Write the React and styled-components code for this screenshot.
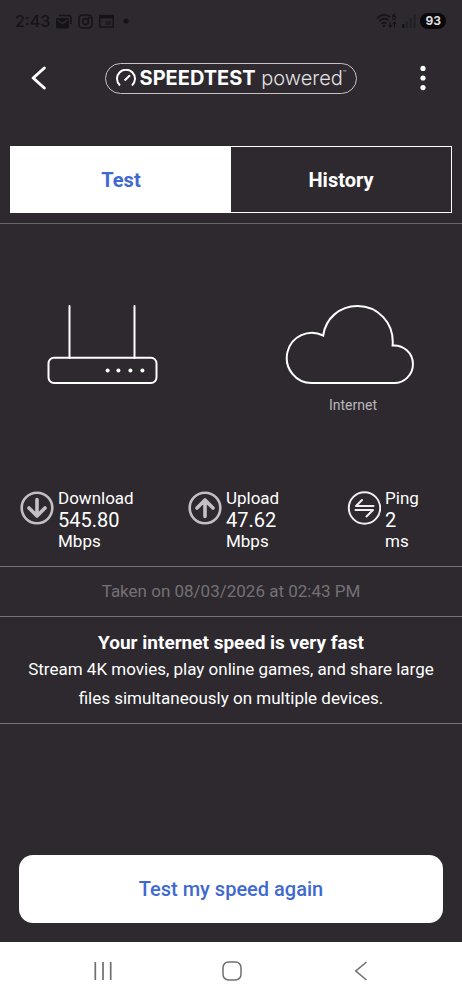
import React, { useState } from 'react';
import styled, { createGlobalStyle } from 'styled-components';

const GlobalStyle = createGlobalStyle`
    * {
        box-sizing: border-box;
    }

    body {
        margin: 0;
        background: #2d292e;
        color: #ffffff;
        font-family: Roboto, "Liberation Sans", sans-serif;
    }

    button {
        font-family: inherit;
        cursor: pointer;
    }

    svg {
        display: block;
        flex: none;
    }
`;

const Page = styled.div`
    display: flex;
    flex-direction: column;
    min-height: 100vh;
`;

const StatusBar = styled.div`
    display: flex;
    justify-content: space-between;
    align-items: center;
    height: 42px;
    padding: 0 16px 0 15px;
    color: #151317;
`;

const StatusGroup = styled.div`
    display: flex;
    align-items: center;
    gap: ${(props) => props.$gap}px;
`;

const Clock = styled.span`
    font-family: Inter, Roboto, sans-serif;
    font-weight: 500;
    font-size: 16px;
`;

const Battery = styled.span`
    padding: 0 5px;
    border-radius: 8px;
    background: #09080a;
    color: #dedcdf;
    font-family: Inter, Roboto, sans-serif;
    font-weight: 700;
    font-size: 12px;
    line-height: 16px;
`;

const Header = styled.header`
    display: flex;
    justify-content: space-between;
    align-items: center;
    height: 72px;
    padding: 0 24px;
`;

const IconButton = styled.button`
    display: flex;
    justify-content: center;
    align-items: center;
    width: 30px;
    height: 40px;
    padding: 0;
    border: none;
    background: none;
    color: ${(props) => props.$color || '#ffffff'};
`;

const Logo = styled.div`
    display: flex;
    align-items: center;
    gap: 4px;
    height: 31px;
    padding: 0 10px;
    border: 1px solid #c4c2c5;
    border-radius: 16px;
    font-family: Inter, "Open Sans", sans-serif;
    font-size: 20px;
    line-height: 28px;
    white-space: nowrap;
`;

const LogoName = styled.span`
    font-weight: 700;
`;

const LogoTag = styled.span`
    font-weight: 300;
    color: #e3e1e4;
`;

const TradeMark = styled.sup`
    font-size: 6px;
    line-height: 6px;
    vertical-align: 10px;
`;

const Tabs = styled.div`
    display: flex;
    height: 67px;
    margin: 32px 10px 10px;
    border: 1px solid #ffffff;
`;

const Tab = styled.button`
    flex: 1;
    border: none;
    background: ${(props) => (props.$active ? '#ffffff' : 'transparent')};
    color: ${(props) => (props.$active ? '#4069d0' : '#ffffff')};
    font-weight: 700;
    font-size: 20px;
`;

const Diagram = styled.section`
    display: flex;
    justify-content: space-between;
    padding: 80px 41px 74px 47px;
    border-top: 1px solid #69666a;
`;

const DiagramNode = styled.figure`
    display: flex;
    flex-direction: column;
    align-items: center;
    gap: 12px;
    margin: 0;
`;

const DiagramLabel = styled.figcaption`
    color: #b9b7ba;
    font-size: 14px;
    line-height: 18px;
`;

const Stats = styled.section`
    display: grid;
    grid-template-columns: 38% 36% 1fr;
    padding: 0 0 14px 20px;
`;

const Stat = styled.div`
    display: flex;
    align-items: flex-start;
    gap: 4px;
`;

const StatIcon = styled.div`
    padding-top: 3px;
`;

const StatText = styled.div`
    display: flex;
    flex-direction: column;
    font-size: 17px;
    line-height: 21px;
`;

const StatValue = styled.span`
    font-size: 20px;
    line-height: 22px;
`;

const Taken = styled.p`
    margin: 0;
    padding: 14px 16px;
    border: 1px solid #757276;
    border-width: 1px 0;
    color: #747176;
    font-size: 17px;
    line-height: 21px;
    text-align: center;
`;

const Verdict = styled.section`
    padding: 14px 16px 10px;
    border-bottom: 1px solid #757276;
    text-align: center;
`;

const VerdictTitle = styled.h1`
    margin: 0;
    font-weight: 700;
    font-size: 19px;
    line-height: 24px;
`;

const VerdictText = styled.p`
    margin: 0;
    font-size: 17px;
    line-height: 29px;
`;

const Footer = styled.footer`
    margin-top: auto;
    padding: 19px;
`;

const PrimaryButton = styled.button`
    width: 100%;
    height: 68px;
    border: none;
    border-radius: 14px;
    background: #ffffff;
    color: #4069d0;
    font-weight: 500;
    font-size: 20px;
`;

const NavBar = styled.nav`
    display: flex;
    justify-content: space-between;
    align-items: center;
    height: 58px;
    padding: 0 86px 0 88px;
    background: #ffffff;
`;

const MailIcon = () => (
  <svg width="16" height="15" viewBox="0 0 16 15">
    <path d="M3 1.5H13Q14.8 1.5 14.8 3.3V10" fill="none" stroke="currentColor" strokeWidth="1.6" />
    <rect x="0" y="4" width="13" height="10.5" rx="1.5" fill="currentColor" />
    <path d="M1.5 6L6.5 9.6L11.5 6" fill="none" stroke="#2d292e" strokeWidth="1.3" />
  </svg>
);

const CameraIcon = () => (
  <svg width="15" height="15" viewBox="0 0 15 15" fill="none" stroke="currentColor" strokeWidth="1.5">
    <rect x="1" y="1" width="13" height="13" rx="3.5" />
    <circle cx="7.5" cy="7.5" r="3" />
    <circle cx="11.2" cy="3.8" r="0.5" />
  </svg>
);

const WindowIcon = () => (
  <svg width="15" height="14" viewBox="0 0 15 14">
    <rect x="0.8" y="1.6" width="13.4" height="11.4" fill="none" stroke="currentColor" strokeWidth="1.4" />
    <path d="M0 1H15V4.4H0Z" fill="currentColor" />
    <path d="M6.5 7H12V11H6.5Z" fill="currentColor" opacity="0.6" />
  </svg>
);

const DotIcon = () => (
  <svg width="12" height="6" viewBox="0 0 12 6">
    <circle cx="6" cy="3" r="2.5" fill="currentColor" />
  </svg>
);

const WifiIcon = () => (
  <svg width="22" height="16" viewBox="0 0 22 16" fill="none" stroke="currentColor">
    <path d="M1 5.5Q7.5 -1 14 4.2M3.3 8.2Q8 3.6 12.4 7.3M5.6 10.8Q8 8.8 10.4 10.6" strokeWidth="1.7" />
    <circle cx="8" cy="13" r="1.3" fill="currentColor" stroke="none" />
    <path d="M19.5 1Q16.6 1 16.6 4.4A1.6 1.6 0 1 0 17 3.6" strokeWidth="1.1" />
    <path d="M14.2 9V14M12.4 12.2L14.2 14.2L16 12.2M18.4 14.5V9.3M16.6 11L18.4 9L20.2 11" strokeWidth="1.1" />
  </svg>
);

const SignalIcon = () => (
  <svg width="14" height="14" viewBox="0 0 14 14" fill="currentColor">
    <rect x="0" y="10" width="2.4" height="4" />
    <rect x="3.8" y="7" width="2.4" height="7" opacity="0.35" />
    <rect x="7.6" y="4" width="2.4" height="10" opacity="0.35" />
    <rect x="11.4" y="0" width="2.4" height="14" opacity="0.35" />
  </svg>
);

const BackIcon = () => (
  <svg width="16" height="24" viewBox="0 0 16 24">
    <path d="M13.3 2L2.2 12L13.3 22" fill="none" stroke="currentColor" strokeWidth="3" strokeLinecap="round" strokeLinejoin="round" />
  </svg>
);

const MoreIcon = () => (
  <svg width="6" height="26" viewBox="0 0 6 26" fill="currentColor">
    <circle cx="3" cy="3.4" r="2.6" />
    <circle cx="3" cy="13" r="2.6" />
    <circle cx="3" cy="22.6" r="2.6" />
  </svg>
);

const GaugeIcon = () => (
  <svg width="20" height="18" viewBox="0 0 20 18" fill="none" stroke="currentColor" strokeWidth="2">
    <path d="M4 16.4A9 9 0 1 1 16 16.4" />
    <path d="M8.6 11.4L14 6.3" strokeWidth="2" />
  </svg>
);

const RouterDrawing = () => (
  <svg width="111" height="80" viewBox="0 0 111 80" fill="none" stroke="#ffffff" strokeWidth="2">
    <path d="M22.5 2V54M87.5 2V54" strokeLinecap="round" />
    <rect x="1.5" y="53.8" width="108" height="25.2" rx="5.5" />
    <g fill="#ffffff" stroke="none">
      <circle cx="60.6" cy="66.5" r="2" />
      <circle cx="71.4" cy="66.5" r="2" />
      <circle cx="83.4" cy="66.5" r="2" />
      <circle cx="95.4" cy="66.5" r="2" />
    </g>
  </svg>
);

const CloudDrawing = () => (
  <svg width="136" height="80" viewBox="0 0 136 80" fill="none" stroke="#ffffff" strokeWidth="2">
    <path d="M27 79A25.1 25.1 0 1 1 38.2 31.5C40.5 14.5 54.5 2 72.5 2C92.5 2 109.5 18.5 107.6 41.5A18.8 18.8 0 1 1 108 79Z" />
  </svg>
);

const DownIcon = () => (
  <svg width="34" height="34" viewBox="0 0 34 34" fill="none" stroke="#c3c0c4" strokeLinecap="round" strokeLinejoin="round">
    <circle cx="17" cy="17" r="15.3" strokeWidth="2.6" />
    <path d="M17 8.5V24.5M9 17L17 25L25 17" strokeWidth="3.6" />
  </svg>
);

const UpIcon = () => (
  <svg width="34" height="34" viewBox="0 0 34 34" fill="none" stroke="#c3c0c4" strokeLinecap="round" strokeLinejoin="round">
    <circle cx="17" cy="17" r="15.3" strokeWidth="2.6" />
    <path d="M17 25.5V9.5M9 17L17 9L25 17" strokeWidth="3.6" />
  </svg>
);

const PingIcon = () => (
  <svg width="34" height="34" viewBox="0 0 34 34" fill="none" stroke="#f0eef0" strokeWidth="2">
    <circle cx="17.5" cy="17" r="15.7" />
    <path d="M26.5 15H9L15 9M8.5 19H26L19.5 25.5" strokeLinecap="round" strokeLinejoin="round" />
  </svg>
);

const RecentsIcon = () => (
  <svg width="20" height="20" viewBox="0 0 20 20" stroke="currentColor" strokeWidth="1.7">
    <path d="M2.3 1V19M10 1V19M17.7 1V19" />
  </svg>
);

const HomeIcon = () => (
  <svg width="20" height="20" viewBox="0 0 20 20" fill="none" stroke="currentColor" strokeWidth="1.5">
    <rect x="1" y="1" width="18" height="18" rx="5.5" />
  </svg>
);

const NavBackIcon = () => (
  <svg width="14" height="20" viewBox="0 0 14 20" fill="none" stroke="currentColor" strokeWidth="1.6">
    <path d="M12.5 1L1.8 10L12.5 19" />
  </svg>
);

const stats = [
  { name: 'Download', value: '545.80', unit: 'Mbps', Icon: DownIcon },
  { name: 'Upload', value: '47.62', unit: 'Mbps', Icon: UpIcon },
  { name: 'Ping', value: '2', unit: 'ms', Icon: PingIcon },
];

const App = () => {
  const [tab, setTab] = useState('Test');

  return (
    <Page>
      <GlobalStyle />
      <StatusBar>
        <StatusGroup $gap={6}>
          <Clock>2:43</Clock>
          <MailIcon />
          <CameraIcon />
          <WindowIcon />
          <DotIcon />
        </StatusGroup>
        <StatusGroup $gap={4}>
          <WifiIcon />
          <SignalIcon />
          <Battery>93</Battery>
        </StatusGroup>
      </StatusBar>
      <Header>
        <IconButton aria-label="Back"><BackIcon /></IconButton>
        <Logo>
          <GaugeIcon />
          <div>
            <LogoName>SPEEDTEST</LogoName> <LogoTag>powered<TradeMark>™</TradeMark></LogoTag>
          </div>
        </Logo>
        <IconButton aria-label="More options"><MoreIcon /></IconButton>
      </Header>
      <Tabs role="tablist">
        {['Test', 'History'].map((name) => (
          <Tab
            key={name}
            role="tab"
            aria-selected={tab === name}
            $active={tab === name}
            onClick={() => setTab(name)}
          >
            {name}
          </Tab>
        ))}
      </Tabs>
      <Diagram>
        <DiagramNode>
          <RouterDrawing />
        </DiagramNode>
        <DiagramNode>
          <CloudDrawing />
          <DiagramLabel>Internet</DiagramLabel>
        </DiagramNode>
      </Diagram>
      <Stats>
        {stats.map(({ name, value, unit, Icon }) => (
          <Stat key={name}>
            <StatIcon><Icon /></StatIcon>
            <StatText>
              <span>{name}</span>
              <StatValue>{value}</StatValue>
              <span>{unit}</span>
            </StatText>
          </Stat>
        ))}
      </Stats>
      <Taken>Taken on 08/03/2026 at 02:43 PM</Taken>
      <Verdict>
        <VerdictTitle>Your internet speed is very fast</VerdictTitle>
        <VerdictText>
          Stream 4K movies, play online games, and share large files simultaneously on multiple devices.
        </VerdictText>
      </Verdict>
      <Footer>
        <PrimaryButton>Test my speed again</PrimaryButton>
      </Footer>
      <NavBar>
        <IconButton $color="#6f6f6f" aria-label="Recent apps"><RecentsIcon /></IconButton>
        <IconButton $color="#6f6f6f" aria-label="Home"><HomeIcon /></IconButton>
        <IconButton $color="#6f6f6f" aria-label="Back"><NavBackIcon /></IconButton>
      </NavBar>
    </Page>
  );
};

export default App;
